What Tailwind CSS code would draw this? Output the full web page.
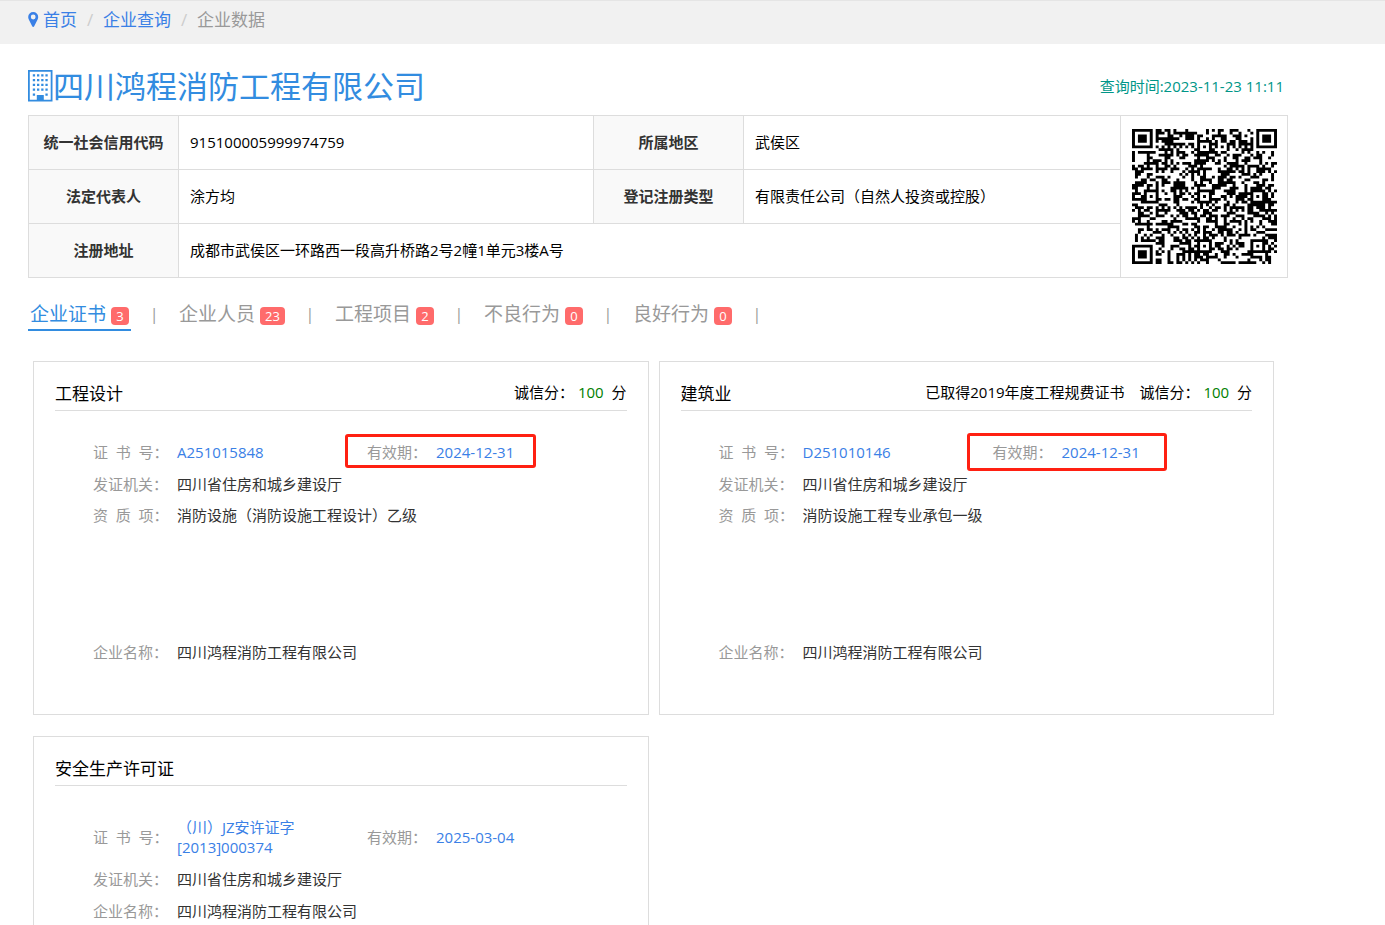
<!DOCTYPE html>
<html lang="zh-CN">
<head>
    <meta charset="UTF-8">
    <meta name="viewport" content="width=device-width, initial-scale=1.0">
    <title>企业数据</title>
    <script src="https://cdn.jsdelivr.net/npm/@tailwindcss/browser@4"></script>
</head>
<body class="bg-white text-black text-[15px] leading-5 font-['Open_Sans','Noto_Sans_CJK_SC',sans-serif]">
    <nav class="h-11 bg-[#f1f1f1] border-t border-[#e5e5e5] px-7 flex items-center pb-1.5 text-[17px] leading-6" aria-label="breadcrumb">
        <a href="#" class="flex items-center gap-1 text-[#3a80e6]">
            <svg class="w-[11px] h-[15px]" viewBox="0 0 11 15" fill="currentColor"><path fill-rule="evenodd" d="M5.2 0a5 5 0 0 1 5 5c0 1-.2 1.600-.6 2.400L6.200 14.300a1.150 1.150 0 0 1-2 0L.8 7.400C.4 6.600.2 6 .2 5a5 5 0 0 1 5-5zm0 2.600a2.400 2.400 0 1 0 0 4.800 2.400 2.400 0 0 0 0-4.800z"/></svg>首页
        </a>
        <span class="w-[26px] text-center text-[#ccc]">/</span>
        <a href="#" class="text-[#3a80e6]">企业查询</a>
        <span class="w-[26px] text-center text-[#ccc]">/</span>
        <span class="text-[#999]">企业数据</span>
    </nav>

    <main class="max-w-[1288px] pl-7">
        <header class="flex items-center justify-between pt-[22px] pb-[9px] pr-1">
            <h1 class="flex items-center text-[31px] leading-10 text-[#328ce0]">
                <svg class="w-[25px] h-8" viewBox="0 0 25 32" fill="currentColor">
                    <path fill-rule="evenodd" d="M0 0h24.500v31.500H0zM1.800 1.800v27.900h20.900V1.800z"/>
                    <path d="M4.800 4.300h2.300v2.300H4.800zM9 4.300h2.300v2.300H9zM13.200 4.300h2.300v2.300h-2.300zM17.400 4.300h2.300v2.300h-2.300zM4.800 9h2.300v2.300H4.800zM9 9h2.300v2.300H9zM13.200 9h2.300v2.300h-2.300zM17.400 9h2.300v2.300h-2.300zM4.800 13.700h2.300V16H4.800zM9 13.700h2.300V16H9zM13.200 13.700h2.300V16h-2.300zM17.400 13.700h2.300V16h-2.300zM4.800 18.400h2.300v2.300H4.800zM9 18.400h2.300v2.300H9zM13.200 18.400h2.300v2.300h-2.300zM17.400 18.400h2.300v2.300h-2.300zM4.800 23.500h2.300v2.300H4.800zM17.400 23.500h2.300v2.300h-2.300zM8.800 25h7v5h-7z"/>
                </svg>四川鸿程消防工程有限公司
            </h1>
            <p class="text-[#009688]">查询时间:2023-11-23 11:11</p>
        </header>

        <table class="w-full table-fixed border-collapse">
            <colgroup>
                <col class="w-[150px]">
                <col class="w-[415px]">
                <col class="w-[150px]">
                <col>
                <col class="w-[167px]">
            </colgroup>
            <tbody>
                <tr class="h-[54px]">
                    <th class="border border-[#ddd] pb-0.5 bg-[#f9f9f9] text-[#333]">统一社会信用代码</th>
                    <td class="border border-[#ddd] px-[11px] pb-0.5">915100005999974759</td>
                    <th class="border border-[#ddd] pb-0.5 bg-[#f9f9f9] text-[#333]">所属地区</th>
                    <td class="border border-[#ddd] px-[11px] pb-0.5">武侯区</td>
                    <td rowspan="3" class="border border-[#ddd] pl-[11px]">
                        <svg id="qr" class="w-[145px] h-[135px]" viewBox="0 0 49 49" preserveAspectRatio="none" role="img" aria-label="二维码"></svg>
                    </td>
                </tr>
                <tr class="h-[54px]">
                    <th class="border border-[#ddd] pb-0.5 bg-[#f9f9f9] text-[#333]">法定代表人</th>
                    <td class="border border-[#ddd] px-[11px] pb-0.5">涂方均</td>
                    <th class="border border-[#ddd] pb-0.5 bg-[#f9f9f9] text-[#333]">登记注册类型</th>
                    <td class="border border-[#ddd] px-[11px] pb-0.5">有限责任公司（自然人投资或控股）</td>
                </tr>
                <tr class="h-[54px]">
                    <th class="border border-[#ddd] pb-0.5 bg-[#f9f9f9] text-[#333]">注册地址</th>
                    <td colspan="3" class="border border-[#ddd] px-[11px] pb-0.5">成都市武侯区一环路西一段高升桥路2号2幢1单元3楼A号</td>
                </tr>
            </tbody>
        </table>

        <nav class="mt-[21px] flex gap-[21px] text-[19px] leading-[30px] text-[#999]" aria-label="企业信息">
            <a href="#" class="flex items-center gap-[5px] px-0.5 border-b-2 border-[#328ce0] text-[#328ce0]">企业证书<span class="mt-1 min-w-[18px] px-[5px] rounded-sm bg-[#ff6b6b] text-white text-[13px] leading-[18px] text-center">3</span></a>
            <span class="w-1 flex justify-center text-[16px] leading-[30px]">|</span>
            <a href="#" class="flex items-center gap-[5px] px-0.5 border-b-2 border-transparent">企业人员<span class="mt-1 min-w-[18px] px-[5px] rounded-sm bg-[#ff6b6b] text-white text-[13px] leading-[18px] text-center">23</span></a>
            <span class="w-1 flex justify-center text-[16px] leading-[30px]">|</span>
            <a href="#" class="flex items-center gap-[5px] px-0.5 border-b-2 border-transparent">工程项目<span class="mt-1 min-w-[18px] px-[5px] rounded-sm bg-[#ff6b6b] text-white text-[13px] leading-[18px] text-center">2</span></a>
            <span class="w-1 flex justify-center text-[16px] leading-[30px]">|</span>
            <a href="#" class="flex items-center gap-[5px] px-0.5 border-b-2 border-transparent">不良行为<span class="mt-1 min-w-[18px] px-[5px] rounded-sm bg-[#ff6b6b] text-white text-[13px] leading-[18px] text-center">0</span></a>
            <span class="w-1 flex justify-center text-[16px] leading-[30px]">|</span>
            <a href="#" class="flex items-center gap-[5px] px-0.5 border-b-2 border-transparent">良好行为<span class="mt-1 min-w-[18px] px-[5px] rounded-sm bg-[#ff6b6b] text-white text-[13px] leading-[18px] text-center">0</span></a>
            <span class="w-1 flex justify-center text-[16px] leading-[30px]">|</span>
        </nav>

        <div class="mt-[30px] pl-[5px] pr-[14px] grid grid-cols-2 gap-x-2.5 gap-y-[21px]">
            <section class="border border-[#ddd] px-[21px] pt-5 pb-[46px]">
                <div class="flex items-start justify-between pb-1 border-b border-[#ddd]">
                    <h2 class="text-[17px] leading-6">工程设计</h2>
                    <p>诚信分： <span class="text-[#008000]">100</span>&nbsp; 分</p>
                </div>
                <table class="mt-[25px] ml-[38px] table-fixed text-[#333]">
                    <tbody>
                        <tr>
                            <th class="w-[84px] py-1.5 text-left font-normal text-[#999]">证&nbsp;&nbsp;书&nbsp;&nbsp;号：</th>
                            <td class="w-[190px] py-1.5 pr-14"><a href="#" class="text-[#3a80e6]">A251015848</a></td>
                            <th class="w-[69px] py-1.5 text-left font-normal text-[#999] relative">有效期：<span class="absolute -left-[22px] -top-0.5 w-[191px] h-[34px] border-3 border-[#ff2012] rounded-[3px]"></span></th>
                            <td class="py-1.5 text-[#3a80e6]">2024-12-31</td>
                        </tr>
                        <tr>
                            <th class="py-1.5 text-left font-normal text-[#999]">发证机关：</th>
                            <td colspan="3" class="py-1.5">四川省住房和城乡建设厅</td>
                        </tr>
                        <tr class="h-[136px] align-top">
                            <th class="py-[5px] text-left font-normal text-[#999]">资&nbsp;&nbsp;质&nbsp;&nbsp;项：</th>
                            <td colspan="3" class="py-[5px]">消防设施（消防设施工程设计）乙级</td>
                        </tr>
                        <tr>
                            <th class="py-1.5 text-left font-normal text-[#999]">企业名称：</th>
                            <td colspan="3" class="py-1.5">四川鸿程消防工程有限公司</td>
                        </tr>
                    </tbody>
                </table>
            </section>

            <section class="border border-[#ddd] px-[21px] pt-5 pb-[46px]">
                <div class="flex items-start justify-between pb-1 border-b border-[#ddd]">
                    <h2 class="text-[17px] leading-6">建筑业</h2>
                    <p class="flex gap-[15px]"><span>已取得2019年度工程规费证书</span><span>诚信分： <span class="text-[#008000]">100</span>&nbsp; 分</span></p>
                </div>
                <table class="mt-[25px] ml-[38px] table-fixed text-[#333]">
                    <tbody>
                        <tr>
                            <th class="w-[84px] py-1.5 text-left font-normal text-[#999]">证&nbsp;&nbsp;书&nbsp;&nbsp;号：</th>
                            <td class="w-[190px] py-1.5 pr-14"><a href="#" class="text-[#3a80e6]">D251010146</a></td>
                            <th class="w-[69px] py-1.5 text-left font-normal text-[#999] relative">有效期：<span class="absolute -left-[26px] -top-[3px] w-[200px] h-[38px] border-3 border-[#ff2012] rounded-[3px]"></span></th>
                            <td class="py-1.5 text-[#3a80e6]">2024-12-31</td>
                        </tr>
                        <tr>
                            <th class="py-1.5 text-left font-normal text-[#999]">发证机关：</th>
                            <td colspan="3" class="py-1.5">四川省住房和城乡建设厅</td>
                        </tr>
                        <tr class="h-[136px] align-top">
                            <th class="py-[5px] text-left font-normal text-[#999]">资&nbsp;&nbsp;质&nbsp;&nbsp;项：</th>
                            <td colspan="3" class="py-[5px]">消防设施工程专业承包一级</td>
                        </tr>
                        <tr>
                            <th class="py-1.5 text-left font-normal text-[#999]">企业名称：</th>
                            <td colspan="3" class="py-1.5">四川鸿程消防工程有限公司</td>
                        </tr>
                    </tbody>
                </table>
            </section>

            <section class="border border-[#ddd] px-[21px] pt-5 pb-[46px]">
                <div class="flex items-start justify-between pb-1 border-b border-[#ddd]">
                    <h2 class="text-[17px] leading-6">安全生产许可证</h2>
                </div>
                <table class="mt-[25px] ml-[38px] table-fixed text-[#333]">
                    <tbody>
                        <tr>
                            <th class="w-[84px] py-1.5 text-left font-normal text-[#999]">证&nbsp;&nbsp;书&nbsp;&nbsp;号：</th>
                            <td class="w-[190px] py-1.5 pr-14"><a href="#" class="text-[#3a80e6]">（川）JZ安许证字[2013]000374</a></td>
                            <th class="w-[69px] py-1.5 text-left font-normal text-[#999]">有效期：</th>
                            <td class="py-1.5 text-[#3a80e6]">2025-03-04</td>
                        </tr>
                        <tr>
                            <th class="py-1.5 text-left font-normal text-[#999]">发证机关：</th>
                            <td colspan="3" class="py-1.5">四川省住房和城乡建设厅</td>
                        </tr>
                        <tr>
                            <th class="py-1.5 text-left font-normal text-[#999]">企业名称：</th>
                            <td colspan="3" class="py-1.5">四川鸿程消防工程有限公司</td>
                        </tr>
                    </tbody>
                </table>
            </section>
        </div>
    </main>

    <script>
        const SIZE = 49;
        let seed = 20231123;

        function random() {
            seed = (seed * 1103515245 + 12345) % 2147483648;
            return seed / 2147483648;
        }

        // finder squares sit in three corners, with a white ring around each
        function finder(x, y) {
            for (const [fx, fy] of [[3, 3], [SIZE - 4, 3], [3, SIZE - 4]]) {
                const d = Math.max(Math.abs(x - fx), Math.abs(y - fy));
                if (d <= 4) return d !== 2 && d !== 4;
            }
            return null;
        }

        function alignment(x, y) {
            for (const [ax, ay] of [[24, 6], [6, 24], [24, 24], [42, 24], [24, 42], [42, 42]]) {
                const d = Math.max(Math.abs(x - ax), Math.abs(y - ay));
                if (d <= 2) return d !== 1;
            }
            return null;
        }

        function drawCode() {
            let path = '';
            for (let y = 0; y < SIZE; y++) {
                for (let x = 0; x < SIZE; x++) {
                    const bit = random() < 0.5;
                    let dark = finder(x, y);
                    if (dark === null) dark = alignment(x, y);
                    if (dark === null && (x === 6 || y === 6)) dark = (x + y) % 2 === 0;
                    if (dark === null) dark = bit;
                    if (dark) path += `M${x} ${y}h1v1h-1z`;
                }
            }
            document.getElementById('qr').innerHTML = `<path d="${path}"/>`;
        }

        drawCode();
    </script>
</body>
</html>
